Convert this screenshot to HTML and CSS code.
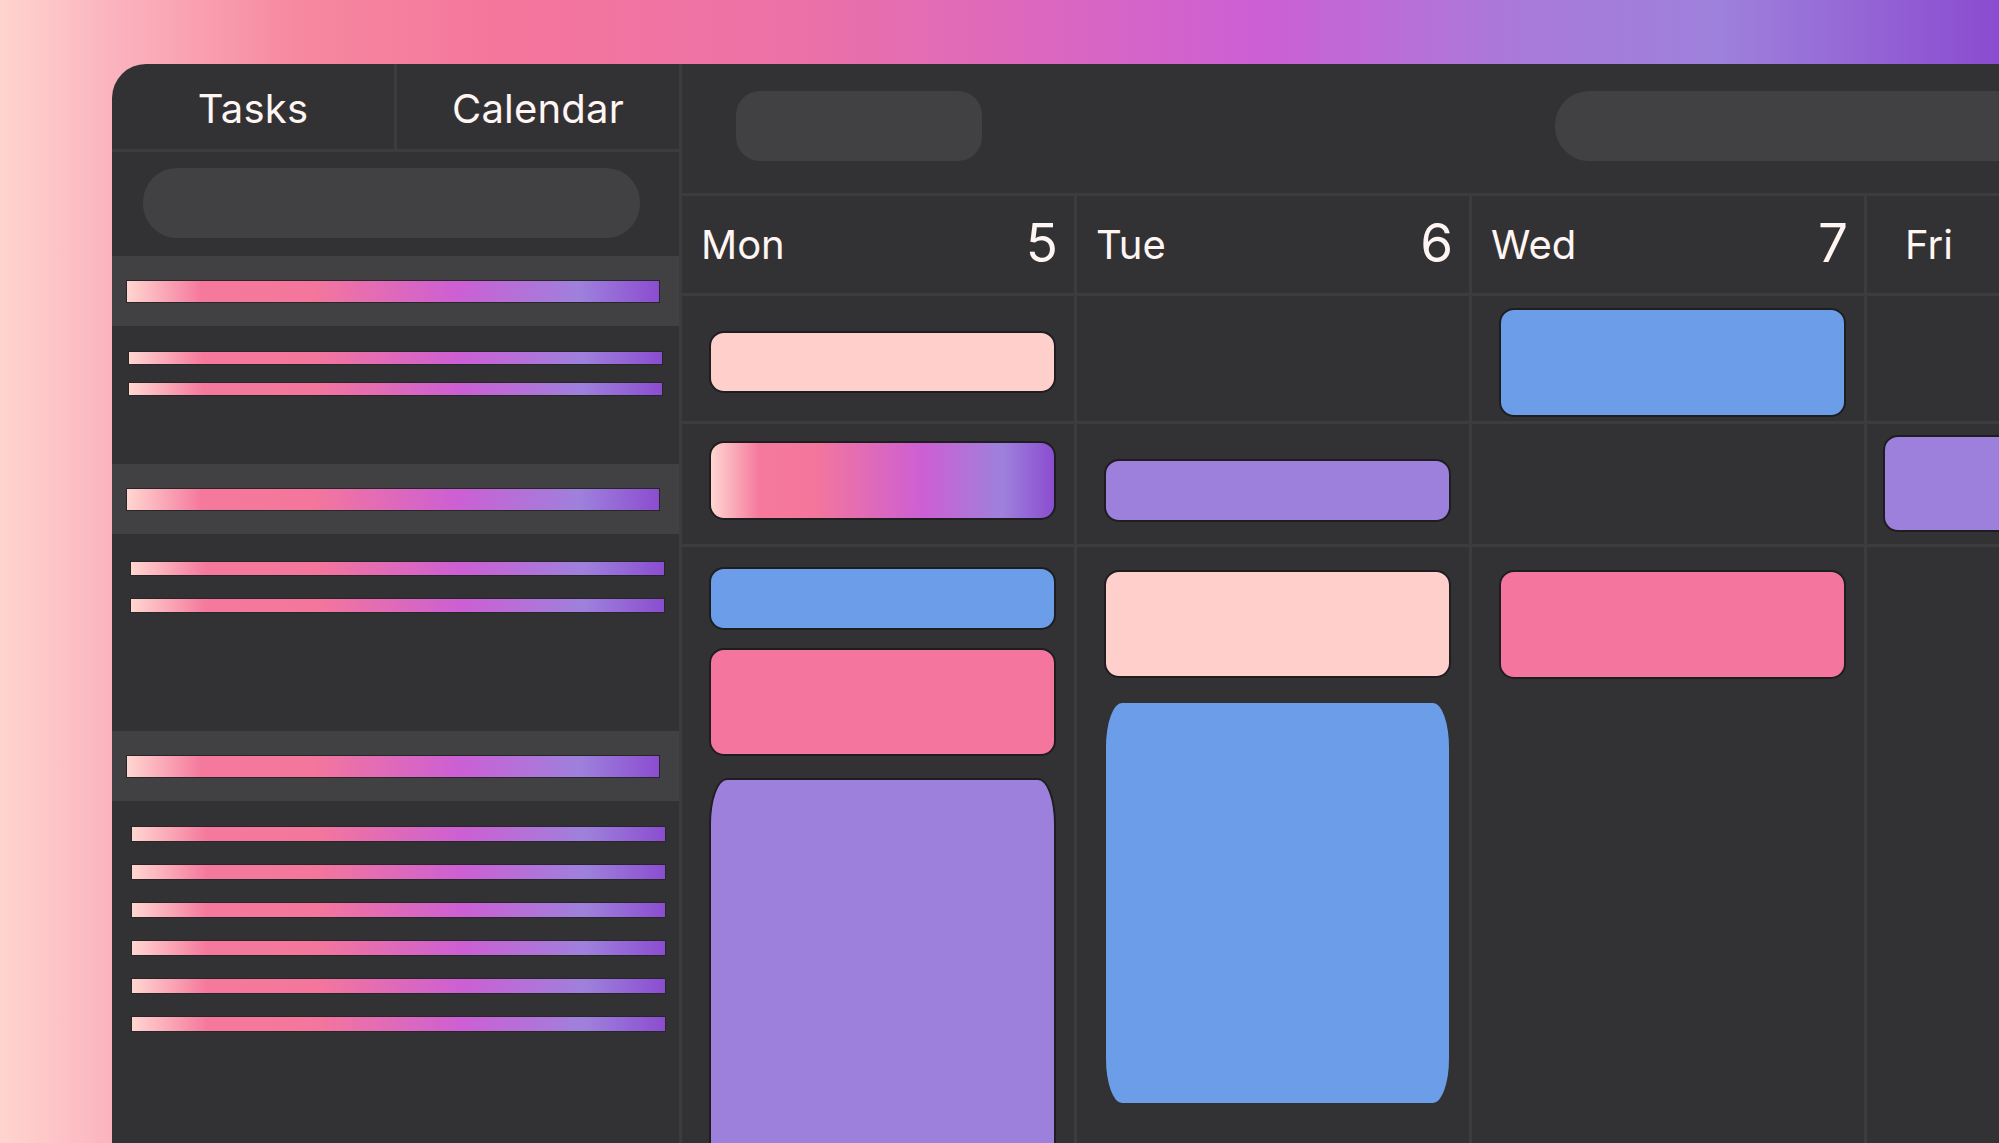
FILE: index.html
```html
<!DOCTYPE html>
<html lang="en">
<head>
<meta charset="utf-8">
<title>Tasks &amp; Calendar</title>
<link rel="stylesheet" href="styles.css">
</head>
<body>
<div class="frame">
  <div class="window">
    <aside class="sidebar">
      <nav class="tabs">
        <div class="tab tab-first">Tasks</div>
        <div class="tab">Calendar</div>
      </nav>
      <div class="search"></div>

      <div class="group-head"><div class="bar bar-head"></div></div>
      <div class="group-list list-1">
        <div class="bar bar-item"></div>
        <div class="bar bar-item"></div>
      </div>

      <div class="group-head"><div class="bar bar-head"></div></div>
      <div class="group-list list-2">
        <div class="bar bar-item"></div>
        <div class="bar bar-item"></div>
      </div>

      <div class="group-head"><div class="bar bar-head"></div></div>
      <div class="group-list list-3">
        <div class="bar bar-item"></div>
        <div class="bar bar-item"></div>
        <div class="bar bar-item"></div>
        <div class="bar bar-item"></div>
        <div class="bar bar-item"></div>
        <div class="bar bar-item"></div>
      </div>
    </aside>

    <main class="main">
      <div class="toolbar">
        <div class="pill pill-small"></div>
        <div class="pill pill-wide"></div>
      </div>
      <div class="grid">
        <div class="cell head"><span class="day">Mon</span><span class="num">5</span></div>
        <div class="cell head"><span class="day">Tue</span><span class="num">6</span></div>
        <div class="cell head"><span class="day">Wed</span><span class="num">7</span></div>
        <div class="cell head head-fri"><span class="day">Fri</span></div>

        <div class="cell"><div class="ev pale" style="margin-top:35px;height:62px"></div></div>
        <div class="cell"></div>
        <div class="cell"><div class="ev blue" style="margin-top:12px;height:109px"></div></div>
        <div class="cell cell-fri"></div>

        <div class="cell"><div class="ev grad" style="margin-top:17px;height:79px"></div></div>
        <div class="cell"><div class="ev purple" style="margin-top:35px;height:63px"></div></div>
        <div class="cell"></div>
        <div class="cell cell-fri"><div class="ev purple" style="margin-top:11px;height:97px"></div></div>

        <div class="cell">
          <div class="ev blue" style="margin-top:20px;height:63px"></div>
          <div class="ev pink" style="margin-top:18px;height:108px"></div>
          <div class="ev purple tall" style="margin-top:22px;height:420px"></div>
        </div>
        <div class="cell">
          <div class="ev pale" style="margin-top:23px;height:108px"></div>
          <div class="ev blue tall plain" style="margin-top:23px;height:404px"></div>
        </div>
        <div class="cell"><div class="ev pink" style="margin-top:23px;height:109px"></div></div>
        <div class="cell cell-fri"></div>
      </div>
    </main>
  </div>
</div>
</body>
</html>
```
FILE: styles.css
```css
* { box-sizing: border-box; }

html, body {
  margin: 0;
  height: 1143px;
  overflow: hidden;
}

body {
  font-family: Inter, "Noto Sans", sans-serif;
  color: #fff5f2;
  background: linear-gradient(90deg,
    #ffd4cf 0%,
    #fbb4bf 5.5%,
    #f6889f 15%,
    #f4769c 25%,
    #ec71a7 40%,
    #cc5fd4 63%,
    #a97ada 76%,
    #9e81dc 86%,
    #8b4bcf 100%);
}

.frame {
  padding: 64px 0 0 112px;
  height: 1143px;
}

.window {
  display: flex;
  height: 1079px;
  background: #323234;
  border-top-left-radius: 34px;
  overflow: hidden;
}

/* Sidebar */
.sidebar {
  width: 570px;
  flex: none;
  border-right: 3px solid #3c3c3e;
  display: flex;
  flex-direction: column;
}

.tabs {
  display: flex;
  height: 88px;
  border-bottom: 3px solid #3c3c3e;
}

.tab {
  flex: 1;
  display: flex;
  align-items: center;
  justify-content: center;
  font-size: 40px;
  padding-top: 3px;
  letter-spacing: 0.2px;
}

.tab-first {
  border-right: 3px solid #3c3c3e;
}

.search {
  margin: 16px 0 18px 31px;
  width: 497px;
  height: 70px;
  border-radius: 34px;
  background: #414143;
}

.bar {
  background: linear-gradient(90deg,
    #ffd6d0 0%,
    #f5799d 14%,
    #f4769c 35%,
    #cc5fd4 62%,
    #9e81dc 85%,
    #8b4dd0 100%);
  box-shadow: 0 0 0 1px #27272a;
}

.group-head {
  height: 70px;
  background: #414143;
  display: flex;
  align-items: center;
}

.bar-head {
  margin-left: 15px;
  width: 532px;
  height: 21px;
}

.group-list {
  display: flex;
  flex-direction: column;
  padding-left: 17px;
}

.bar-item {
  width: 533px;
}

.list-1 { height: 138px; padding-top: 26px; gap: 19px; }
.list-1 .bar-item { height: 12px; }

.list-2 { height: 197px; padding-top: 28px; gap: 24px; padding-left: 19px; }
.list-2 .bar-item { height: 13px; }

.list-3 { padding-top: 26px; gap: 24px; padding-left: 20px; }
.list-3 .bar-item { height: 14px; }

/* Main calendar */
.main {
  flex: 1;
  display: flex;
  flex-direction: column;
  min-width: 0;
  overflow: hidden;
}

.toolbar {
  height: 132px;
  flex: none;
  border-bottom: 3px solid #3c3c3e;
  display: flex;
  align-items: flex-start;
  padding: 27px 0 0 54px;
}

.pill {
  height: 70px;
  background: #414143;
  flex: none;
}

.pill-small {
  width: 246px;
  border-radius: 24px;
}

.pill-wide {
  margin-left: 573px;
  width: 520px;
  border-radius: 34px;
}

.grid {
  flex: 1;
  display: grid;
  grid-template-columns: repeat(4, 395px);
  grid-template-rows: 100px 128px 123px 1fr;
}

.cell {
  border-right: 3px solid #3c3c3e;
  border-bottom: 3px solid #3c3c3e;
  display: flex;
  flex-direction: column;
  padding-left: 27px;
  overflow: hidden;
}

.cell-fri {
  padding-left: 16px;
}

.head {
  flex-direction: row;
  align-items: center;
  justify-content: space-between;
  padding: 0 16px 2px 19px;
}

.head-fri {
  padding-left: 38px;
}

.day {
  font-size: 40px;
  line-height: 1;
  margin-top: 2px;
}

.num {
  font-size: 53px;
  line-height: 1;
}

.ev {
  width: 347px;
  flex: none;
  border: 2px solid #1e1e20;
  border-radius: 15px;
}

.pale { background: #ffd0cb; }
.pink { background: #f4769e; }
.blue { background: #6b9de8; }
.purple { background: #9d7fdc; }
.grad {
  background: linear-gradient(90deg,
    #ffd6d0 0%,
    #f5799d 14%,
    #f4769c 30%,
    #cc5fd4 62%,
    #9e81dc 85%,
    #8b4dd0 100%);
}

.tall {
  border-radius: 18px / 46px;
}

.plain {
  border-color: #323234;
}
```
